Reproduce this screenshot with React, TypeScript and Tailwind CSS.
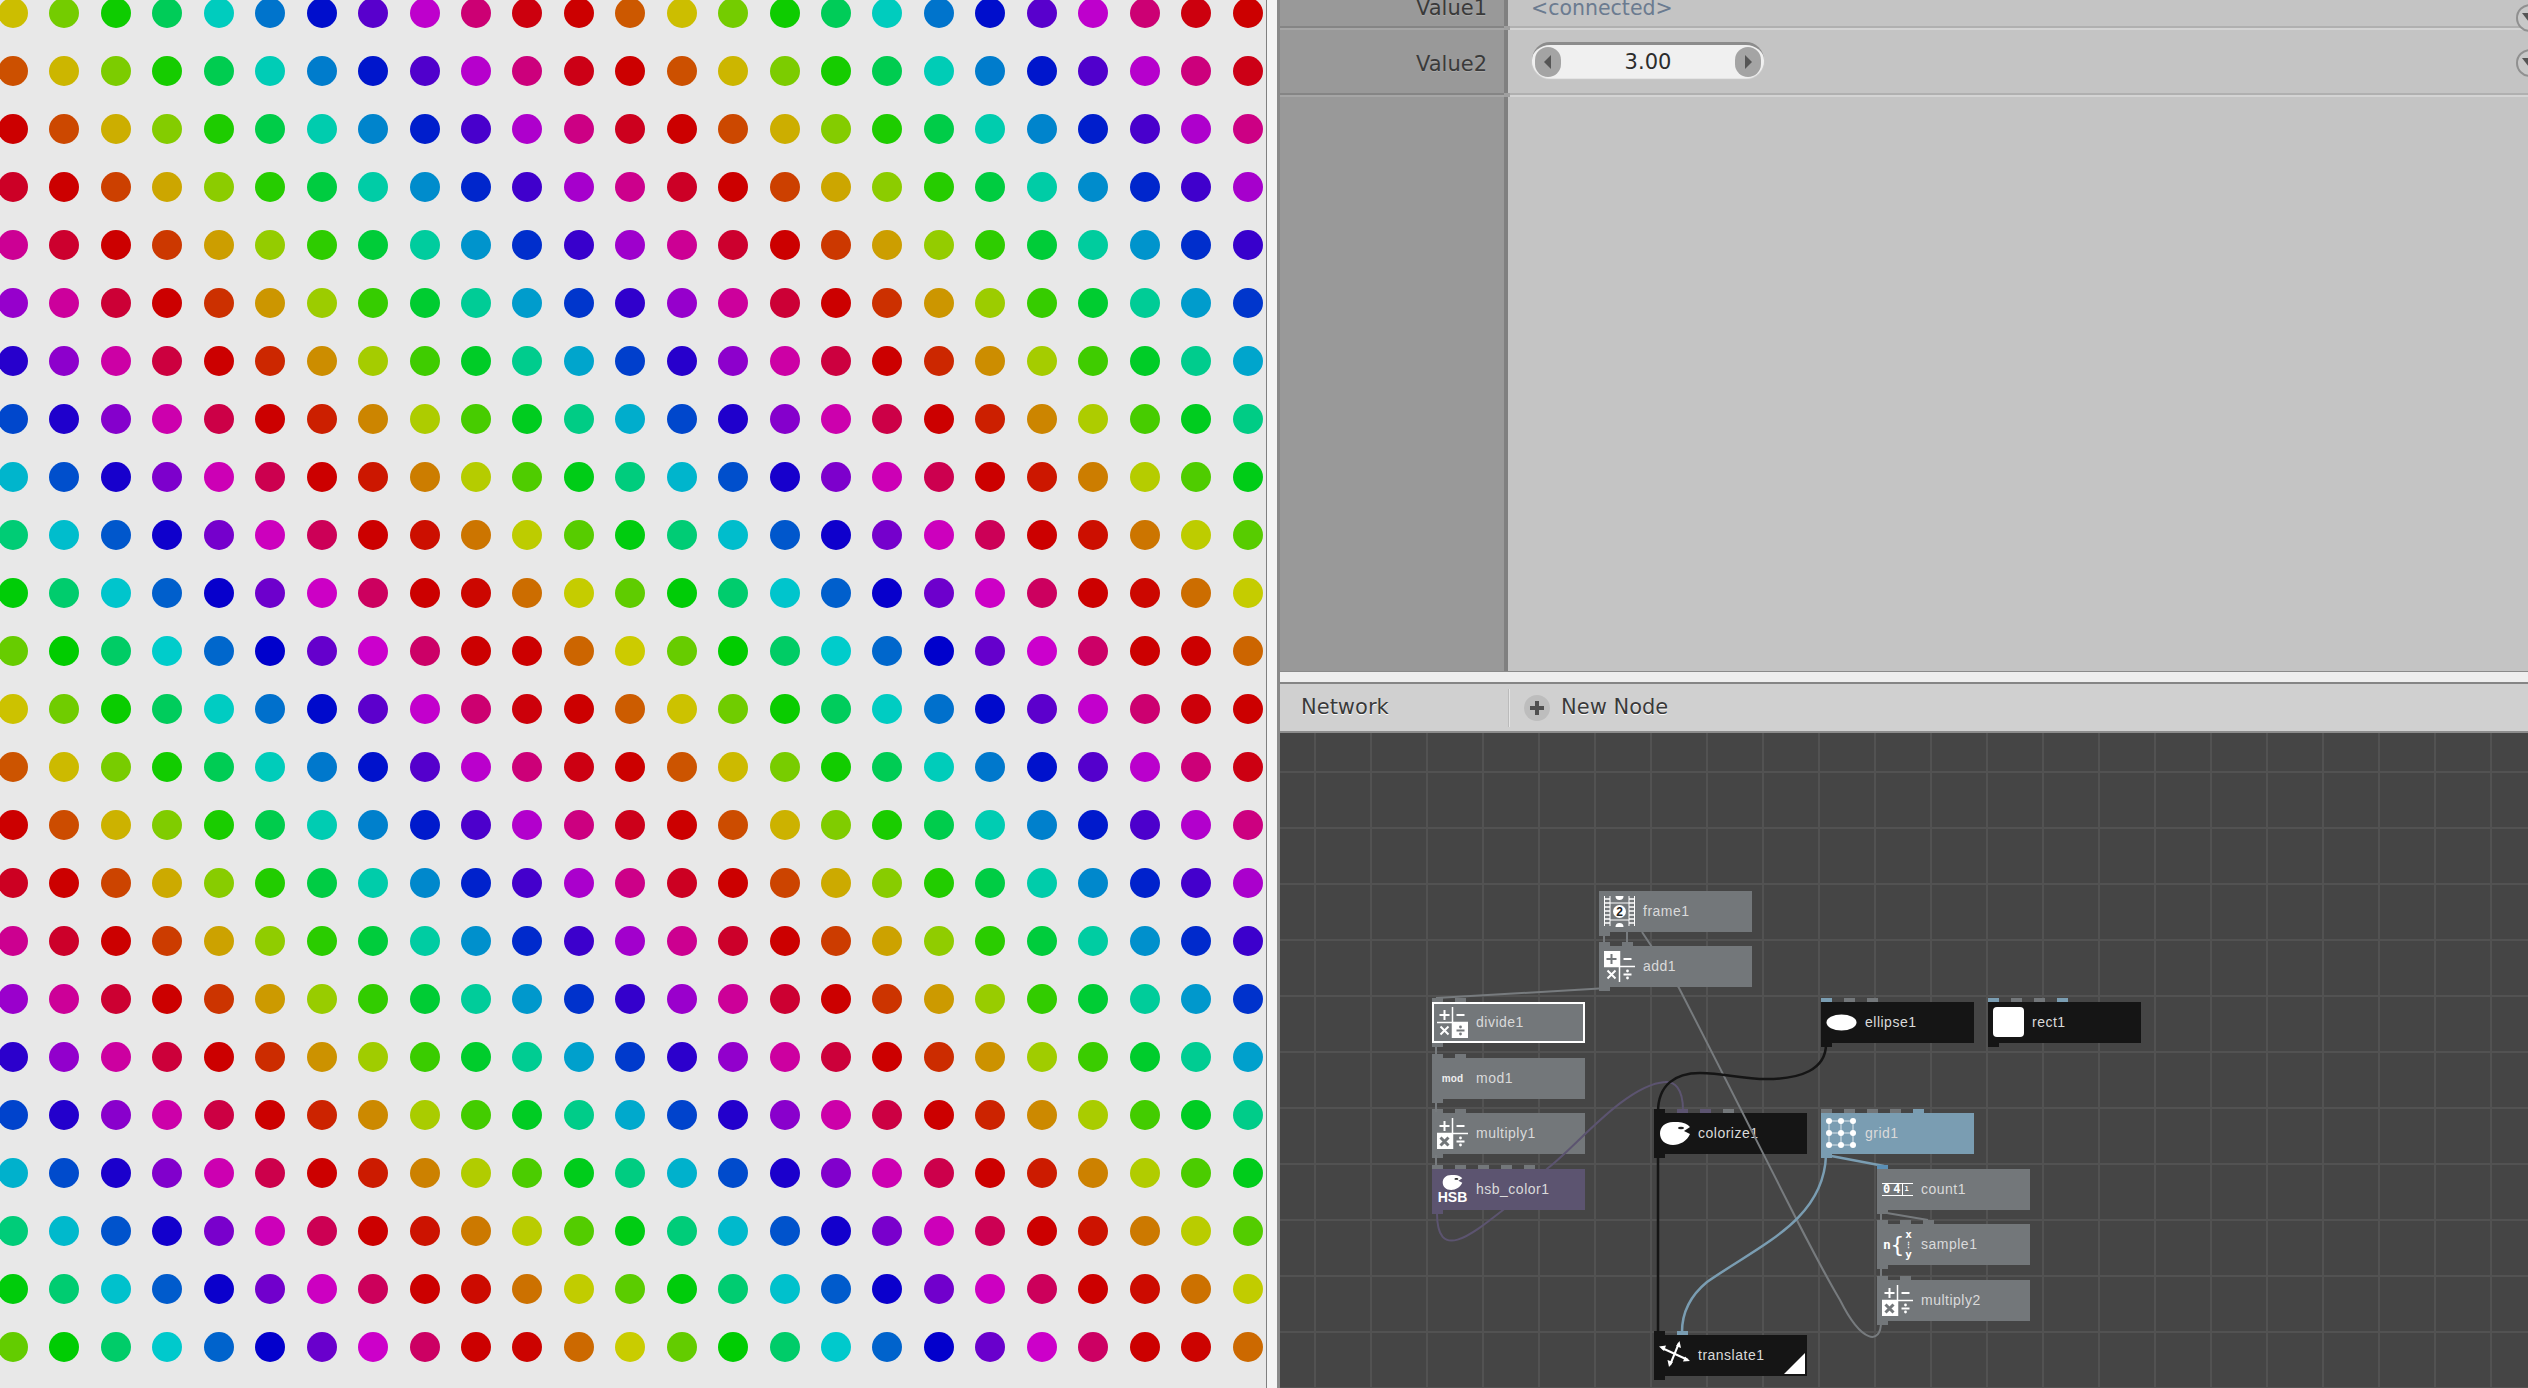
import React from 'react';

const uiFont = 'font-["DejaVu_Sans",sans-serif]';

// hue walks 30deg per column, and sits on red for the last 30 of a 390 cycle
const dotColor = (row: number, col: number) => {
  const u = (((56 + 30 * col - 32.4 * row) % 390) + 390) % 390;
  return `hsl(${Math.min(u, 360)}, 100%, 40%)`;
};

const rows = Array.from({ length: 24 }, (_, i) => i);
const cols = Array.from({ length: 25 }, (_, i) => i);

const DotGrid = () => (
  <div className="w-[1266px] h-full shrink-0 overflow-hidden bg-[#e8e8e8]">
    <div className="grid grid-cols-[repeat(25,51.44px)] auto-rows-[58px] -ml-[12.72px] -mt-[16px] w-max">
      {rows.map((r) =>
        cols.map((c) => (
          <div key={`${r}-${c}`} className="flex items-center justify-center">
            <div className="w-[30px] h-[30px] rounded-full" style={{ background: dotColor(r, c) }} />
          </div>
        ))
      )}
    </div>
  </div>
);

const RoundArrow = ({ dir }: { dir: 'left' | 'right' }) => (
  <div className="w-[26px] h-[30px] rounded-full bg-[#a4a4a4] flex items-center justify-center">
    <svg width="10" height="16" viewBox="0 0 10 16">
      <path d={dir === 'left' ? 'M8 1 L1 8 L8 15Z' : 'M2 1 L9 8 L2 15Z'} fill="#555" />
    </svg>
  </div>
);

const Dropdown = ({ className }: { className: string }) => (
  <div className={`absolute left-[1236px] w-[28px] h-[28px] rounded-full border-2 border-[#909090] bg-[#c8c8c8] ${className}`}>
    <svg width="14" height="10" viewBox="0 0 14 10" className="absolute left-[4px] top-[7px]">
      <path d="M0 0 L14 0 L7 9Z" fill="#555" />
    </svg>
  </div>
);

const RowLine = () => (
  <div className="flex shrink-0">
    <div className="w-[224px]">
      <div className="h-[2px] bg-[#858585]" />
      <div className="h-[2px] bg-[#a6a6a6]" />
    </div>
    <div className="w-[6px] bg-[#a0a0a0]" />
    <div className="flex-1">
      <div className="h-[2px] bg-[#b0b0b0]" />
      <div className="h-[2px] bg-[#d4d4d4]" />
    </div>
  </div>
);

const Params = () => (
  <div className={`relative h-[672px] shrink-0 flex flex-col overflow-hidden border-b border-[#8a8a8a] ${uiFont}`}>
    <div className="flex h-[26px] shrink-0">
      <div className="w-[224px] bg-[#999999] text-right pr-[17px] text-[21px] leading-[16px] text-[#3a3a3a] [text-shadow:0_1px_0_#aaa]">
        Value1
      </div>
      <div className="w-[4px] bg-[#808080]" />
      <div className="flex-1 bg-[#c4c4c4] pl-[23px] text-[20.5px] leading-[16px] text-[#6b7b90]">
        {'<connected>'}
      </div>
    </div>
    <RowLine />
    <div className="flex h-[63px] shrink-0">
      <div className="w-[224px] bg-[#999999] text-right pr-[17px] text-[21px] leading-[68px] text-[#3a3a3a] [text-shadow:0_1px_0_#aaa]">
        Value2
      </div>
      <div className="w-[4px] bg-[#808080]" />
      <div className="flex-1 bg-[#c4c4c4] pl-[24px] pt-[12px]">
        <div className="w-[232px] h-[36px] rounded-full bg-[#f0f0f0] border-t-[3px] border-[#8c8c8c] shadow-[0_1px_1px_#e8e8e8] flex items-center justify-between px-[3px]">
          <RoundArrow dir="left" />
          <span className="text-[21px] pt-[2px] text-[#2c2c2c]">3.00</span>
          <RoundArrow dir="right" />
        </div>
      </div>
    </div>
    <RowLine />
    <div className="flex flex-1">
      <div className="w-[224px] bg-[#999999]" />
      <div className="w-[4px] bg-[#808080]" />
      <div className="flex-1 bg-[#c4c4c4]" />
    </div>
    <Dropdown className="top-[4px]" />
    <Dropdown className="top-[49px]" />
  </div>
);

const NetworkHeader = () => (
  <div className={`h-[51px] shrink-0 flex items-center bg-[#d0d0d0] border-t-2 border-[#858585] border-b-2 border-b-[#8c8c8c] text-[21px] text-[#3a3a3a] [text-shadow:0_1px_0_#fff] ${uiFont}`}>
    <div className="w-[228px] pl-[21px]">Network</div>
    <div className="w-[2px] h-[38px] bg-[#e4e4e4] border-l border-[#bbbbbb]" />
    <div className="w-[26px] h-[26px] ml-[14px] rounded-full bg-[#bdbdbd] flex items-center justify-center">
      <svg width="16" height="16" viewBox="0 0 16 16">
        <path d="M8 1 V15 M1 8 H15" stroke="#505050" strokeWidth="4" />
      </svg>
    </div>
    <div className="ml-[11px]">New Node</div>
  </div>
);

/* ---------- node icons ---------- */

const MathIcon = ({ on, ink }: { on?: 'add' | 'sub' | 'mul' | 'div'; ink: string }) => (
  <svg width="31" height="31" viewBox="0 0 31 31" fill="none" stroke="#fff" strokeWidth="2">
    {on === 'add' && <rect x="0" y="0" width="15" height="15" fill="#fff" stroke="none" />}
    {on === 'mul' && <rect x="0" y="16" width="15" height="15" fill="#fff" stroke="none" />}
    {on === 'div' && <rect x="16" y="16" width="15" height="15" fill="#fff" stroke="none" />}
    <path d="M15.5 0 V31 M0 15.5 H31" strokeWidth="1.5" />
    <path d="M2.5 8 H12.5 M7.5 3 V13" stroke={on === 'add' ? ink : '#fff'} />
    <path d="M19.5 8 H27.5" />
    <path d="M3.5 19.5 L11.5 27.5 M11.5 19.5 L3.5 27.5" stroke={on === 'mul' ? ink : '#fff'} strokeWidth={on === 'mul' ? 3 : 2} />
    <path d="M19.5 23.5 H27.5" stroke={on === 'div' ? ink : '#fff'} />
    <circle cx="23.5" cy="20" r="1.4" fill={on === 'div' ? ink : '#fff'} stroke="none" />
    <circle cx="23.5" cy="27" r="1.4" fill={on === 'div' ? ink : '#fff'} stroke="none" />
  </svg>
);

const FrameIcon = () => (
  <svg width="31" height="31" viewBox="0 0 31 31">
    <path d="M0.5 0 V30 M6 0 V30 M25 0 V30 M30.5 0 V30 M6 7 H25 M6 24 H25" stroke="#fff" strokeWidth="1" fill="none" />
    <path d="M0.5 3 H6 M0.5 7 H6 M0.5 11 H6 M0.5 15 H6 M0.5 19 H6 M0.5 23 H6 M0.5 27 H6 M25 3 H30.5 M25 7 H30.5 M25 11 H30.5 M25 15 H30.5 M25 19 H30.5 M25 23 H30.5 M25 27 H30.5" stroke="#fff" strokeWidth="1.5" />
    <circle cx="15.5" cy="15.5" r="6.5" fill="#fff" />
    <circle cx="15.5" cy="0" r="4" fill="#fff" />
    <circle cx="15.5" cy="31" r="4" fill="#fff" />
    <text x="15.5" y="20" textAnchor="middle" fontSize="12" fontWeight="700" fill="#222" fontFamily="Liberation Sans, sans-serif">2</text>
  </svg>
);

const GridIcon = () => (
  <svg width="31" height="31" viewBox="0 0 31 31">
    <path d="M3 3 H27 M3 15 H27 M3 27 H27 M3 3 V27 M15 3 V27 M27 3 V27" stroke="#dfe8ee" strokeWidth="1" />
    {[3, 15, 27].map((y) => [3, 15, 27].map((x) => <circle key={`${x}${y}`} cx={x} cy={y} r="3" fill="#fff" />))}
  </svg>
);

const PaletteIcon = ({ w, h }: { w: number; h: number }) => (
  <svg width={w} height={h} viewBox="0 0 30 23">
    <path d="M13 0 C20 -0.5 27 1 30 5 L24 9 L30 12 C27 19 20 23 13 23 C5 23 0 18 0 11.5 C0 5 5 0 13 0Z" fill="#fff" />
    <ellipse cx="21" cy="6" rx="3" ry="1.3" fill="#222" />
  </svg>
);

const HsbIcon = () => (
  <div className="flex flex-col items-center w-[30px]">
    <PaletteIcon w={21} h={15} />
    <span className='text-[14px] leading-[15px] font-bold text-white font-["Liberation_Sans",sans-serif]'>HSB</span>
  </div>
);

const ModIcon = () => (
  <div className='w-[31px] text-center text-[10px] font-bold tracking-[0.2px] text-[#eeeeee] font-["Liberation_Sans",sans-serif]'>mod</div>
);

const CountIcon = () => (
  <div className="w-[31px] border-y border-white flex text-[12px] leading-[11px] font-bold text-white font-['DejaVu_Sans_Mono',monospace]">
    <span className="ml-[1px]">0</span>
    <span className="ml-[3px] mr-[2px]">4</span>
    <span className="border-l border-white pl-[1px] text-[7px] leading-[11px]">1</span>
  </div>
);

const SampleIcon = () => (
  <div className="flex items-center text-white font-['DejaVu_Sans_Mono',monospace] font-bold">
    <span className="text-[13px]">n</span>
    <span className="text-[22px] leading-[24px] font-normal">{'{'}</span>
    <div className="flex flex-col items-center text-[11px] leading-[12px] ml-[1px]">
      <span>x</span>
      <span className="text-[7px] leading-[8px]">⋮</span>
      <span>y</span>
    </div>
  </div>
);

const TranslateIcon = () => (
  <svg width="31" height="31" viewBox="0 0 31 31" fill="#fff" stroke="#fff">
    <path d="M3 8 L29 20 M20 3 L11 25" strokeWidth="2" fill="none" />
    <path d="M0 6.5 L7 5.5 L5 11Z M31 21 L24 21.5 L26 16.5Z M20.5 1 L22 8 L17 6Z M10 27 L8.5 20 L14 22Z" stroke="none" />
  </svg>
);

/* ---------- nodes ---------- */

const skin = {
  gray: { body: 'bg-[#73777a]', port: 'bg-[#73777a]' },
  black: { body: 'bg-[#151515]', port: 'bg-[#151515]' },
  blue: { body: 'bg-[#7a9db2]', port: 'bg-[#7a9db2]' },
  purple: { body: 'bg-[#5c5470]', port: 'bg-[#5c5470]' },
};

const portColor: Record<string, string> = {
  g: 'bg-[#73777a]',
  k: 'bg-[#151515]',
  b: 'bg-[#7a9db2]',
  B: 'bg-[#5b8fb5]',
  p: 'bg-[#5c5470]',
};

interface NodeProps {
  name: string;
  pos: string;
  kind: keyof typeof skin;
  inputs: string;
  icon: React.ReactNode;
  selected?: boolean;
  rendered?: boolean;
}

const Node = ({ name, pos, kind, inputs, icon, selected, rendered }: NodeProps) => (
  <div className={`absolute w-[153px] h-[41px] ${pos} ${skin[kind].body} ${selected ? 'border-2 border-white' : ''}`}>
    <div className={`absolute flex gap-[12px] h-[4px] -top-[4px] ${selected ? '-left-[2px] -mt-[2px]' : 'left-0'}`}>
      {inputs.split('').map((c, i) => (
        <div key={i} className={`w-[11px] h-[4px] ${portColor[c]}`} />
      ))}
    </div>
    <div className={`absolute w-[11px] h-[4px] -bottom-[4px] ${selected ? '-left-[2px] -mb-[2px]' : 'left-0'} ${skin[kind].port}`} />
    <div className={`absolute left-[5px] top-[5px] w-[31px] h-[31px] flex items-center justify-center ${selected ? '-ml-[2px] -mt-[2px]' : ''}`}>
      {icon}
    </div>
    <div className={`absolute left-[44px] top-0 h-[41px] leading-[41px] text-[14px] tracking-[0.5px] text-[#dadada] font-["Liberation_Sans",sans-serif] ${selected ? '-ml-[2px] -mt-[2px]' : ''}`}>
      {name}
    </div>
    {rendered && (
      <svg width="21" height="21" viewBox="0 0 21 21" className="absolute right-[2px] bottom-[2px]">
        <path d="M0 21 L21 21 L21 0Z" fill="#fff" />
      </svg>
    )}
  </div>
);

const Wires = () => (
  <svg className="absolute inset-0 w-full h-full" viewBox="1280 733 1248 655" preserveAspectRatio="none" fill="none" strokeWidth="2">
    <g stroke="#777b7e">
      <path d="M1881 1322 C1881 1345 1862 1344 1840 1300 C1810 1250 1770 1165 1679 988 L1642 932" />
      <path d="M1604 932 V946 M1627 932 V946" />
      <path d="M1608 988 L1436 998" />
      <path d="M1436 1044 V1056 M1436 1100 V1112 M1436 1155 V1168" />
      <path d="M1881 1212 L1928 1220 M1881 1212 V1224 M1881 1266 V1280" />
    </g>
    <path d="M1683 1110 C1683 1088 1674 1081 1665 1082 C1625 1085 1575 1148 1548 1168 L1503 1210 C1470 1236 1437 1262 1437 1213" stroke="#5c5470" />
    <path d="M1826 1044 C1826 1070 1800 1079 1767 1079 C1740 1079 1725 1073 1700 1073 C1675 1073 1658 1085 1658 1112 M1658 1155 V1335" stroke="#151515" strokeWidth="2.5" />
    <g stroke="#7a9db2">
      <path d="M1826 1155 C1824 1220 1760 1245 1707 1282 C1690 1296 1682 1312 1682 1332" strokeWidth="2.5" />
      <path d="M1826 1155 L1884 1166" strokeWidth="2.5" />
    </g>
  </svg>
);

const Network = () => (
  <div className="relative flex-1 overflow-hidden bg-[#454545] bg-[linear-gradient(#525252_2px,transparent_2px),linear-gradient(90deg,#525252_2px,transparent_2px)] bg-[size:56px_56px] bg-[position:34px_38px]">
    <Node name="multiply1" pos="left-[152px] top-[380px]" kind="gray" inputs="gg" icon={<MathIcon on="mul" ink="#73777a" />} />
    <Node name="colorize1" pos="left-[374px] top-[380px]" kind="black" inputs="kppg" icon={<PaletteIcon w={30} h={23} />} />
    <Wires />
    <Node name="frame1" pos="left-[319px] top-[158px]" kind="gray" inputs="" icon={<FrameIcon />} />
    <Node name="add1" pos="left-[319px] top-[213px]" kind="gray" inputs="gg" icon={<MathIcon on="add" ink="#73777a" />} />
    <Node name="divide1" pos="left-[152px] top-[269px]" kind="gray" inputs="gg" selected icon={<MathIcon on="div" ink="#73777a" />} />
    <Node name="mod1" pos="left-[152px] top-[325px]" kind="gray" inputs="gg" icon={<ModIcon />} />
    <Node name="hsb_color1" pos="left-[152px] top-[436px]" kind="purple" inputs="ggggg" icon={<HsbIcon />} />
    <Node name="ellipse1" pos="left-[541px] top-[269px]" kind="black" inputs="bgg" icon={
      <svg width="31" height="17" viewBox="0 0 31 17"><ellipse cx="15.5" cy="8.5" rx="15" ry="8" fill="#fff" /></svg>
    } />
    <Node name="rect1" pos="left-[708px] top-[269px]" kind="black" inputs="bggb" icon={
      <svg width="31" height="31" viewBox="0 0 31 31"><rect width="31" height="30" rx="4" fill="#fff" /></svg>
    } />
    <Node name="grid1" pos="left-[541px] top-[380px]" kind="blue" inputs="ggggb" icon={<GridIcon />} />
    <Node name="count1" pos="left-[597px] top-[436px]" kind="gray" inputs="B" icon={<CountIcon />} />
    <Node name="sample1" pos="left-[597px] top-[491px]" kind="gray" inputs="ggg" icon={<SampleIcon />} />
    <Node name="multiply2" pos="left-[597px] top-[547px]" kind="gray" inputs="gg" icon={<MathIcon on="mul" ink="#73777a" />} />
    <Node name="translate1" pos="left-[374px] top-[602px]" kind="black" inputs="kb" rendered icon={<TranslateIcon />} />
  </div>
);

export default function App() {
  return (
    <div className="flex w-[2528px] h-[1388px] overflow-hidden bg-[#eeeeee]">
      <DotGrid />
      <div className="w-[1px] bg-[#808080]" />
      <div className="w-[10px] bg-[#f4f4f4]" />
      <div className="w-[3px] bg-[#8a8a8a]" />
      <div className="flex-1 flex flex-col min-w-0">
        <Params />
        <div className="h-[10px] shrink-0 bg-[#eeeeee]" />
        <NetworkHeader />
        <Network />
      </div>
    </div>
  );
}
